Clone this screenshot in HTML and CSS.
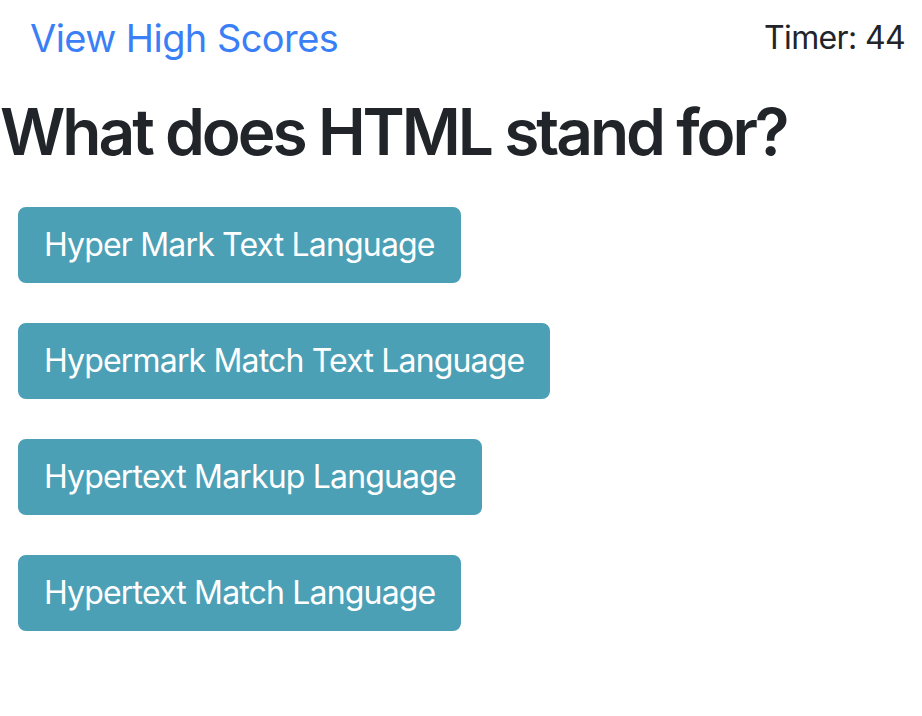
FILE: index.html
```html
<!DOCTYPE html>
<html lang="en">
<head>
<meta charset="utf-8">
<title>Code Quiz</title>
<link rel="stylesheet" href="styles.css">
</head>
<body>
<header class="topbar">
  <a class="scores-link" href="#">View High Scores</a>
  <span class="timer">Timer: 44</span>
</header>
<main class="quiz">
  <h2 class="question">What does HTML stand for?</h2>
  <div class="answers">
    <button class="answer">Hyper Mark Text Language</button>
    <button class="answer">Hypermark Match Text Language</button>
    <button class="answer">Hypertext Markup Language</button>
    <button class="answer">Hypertext Match Language</button>
  </div>
</main>
</body>
</html>
```
FILE: styles.css
```css
* { box-sizing: border-box; }
body {
  margin: 0;
  font-family: Inter, "Noto Sans", "Liberation Sans", sans-serif;
  color: #212529;
  background: #fff;
}
.topbar {
  display: flex;
  justify-content: space-between;
  align-items: center;
  padding: 8px 17px 0 30px;
}
.scores-link {
  font-size: 38px;
  line-height: 60px;
  letter-spacing: -0.015em;
  color: #3a7ff6;
  text-decoration: none;
}
.timer {
  font-size: 32px;
  line-height: 48px;
  letter-spacing: -0.02em;
}
.question {
  margin: 26px 0 36px;
  font-size: 64px;
  font-weight: 600;
  line-height: 1.2;
  letter-spacing: -0.047em;
}
.answers {
  display: flex;
  flex-direction: column;
  align-items: flex-start;
  gap: 40px;
  padding-left: 18px;
}
.answer {
  font-family: inherit;
  font-size: 32px;
  line-height: 48px;
  letter-spacing: -0.026em;
  padding: 12px 24px;
  border: 2px solid #4ca0b6;
  border-radius: 8px;
  background: #4ca0b6;
  color: #fff;
}
```
